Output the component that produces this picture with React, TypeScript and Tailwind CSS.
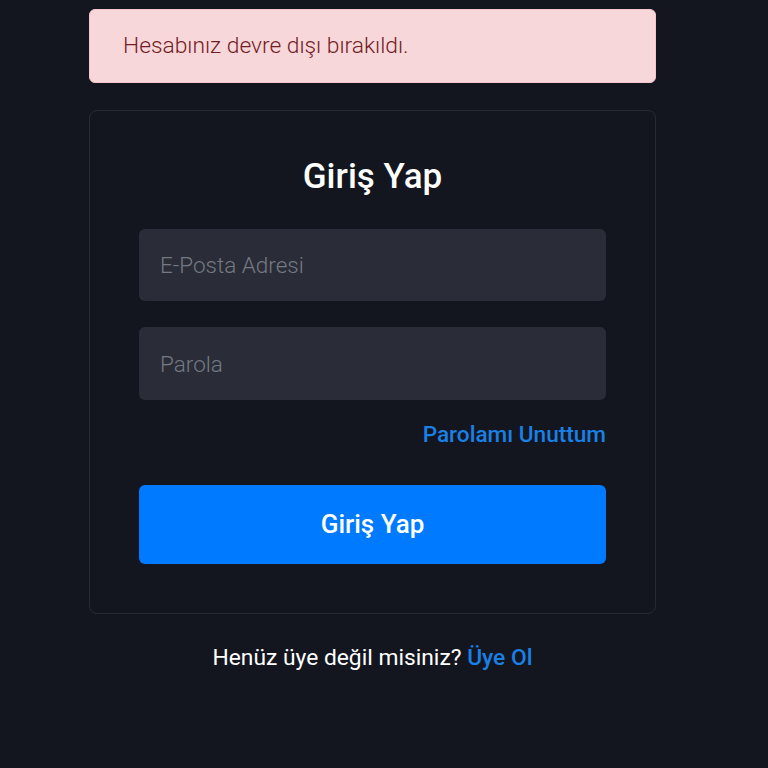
import React from 'react'

export default function App() {
  return (
    <div
      className="min-h-[768px] w-full bg-[#13161f] pt-[9px]"
      style={{ fontFamily: 'Roboto, "Noto Sans", sans-serif' }}
    >
      <div className="ml-[89px] w-[567px]">
        {/* Alert */}
        <div className="flex h-[74px] items-center rounded-[6px] border border-[#f5c6cb] bg-[#f8d7da] px-[33px] text-[22.8px] font-light text-[#721c24]">
          Hesabınız devre dışı bırakıldı.
        </div>

        {/* Card */}
        <div className="mt-[27px] rounded-[8px] border border-[#262a33] px-[49px] pb-[49px] pt-[46px]">
          <h1 className="text-center text-[35px] font-medium leading-[40px] text-white">Giriş Yap</h1>

          <form className="mt-[32px] flex flex-col" onSubmit={e => e.preventDefault()}>
            <input
              type="email"
              placeholder="E-Posta Adresi"
              className="h-[72px] w-full rounded-[6px] bg-[#2a2d38] px-[21px] text-[22.5px] font-light text-white outline-none placeholder:text-[#757982]"
            />
            <input
              type="password"
              placeholder="Parola"
              className="mt-[26px] h-[73px] w-full rounded-[6px] bg-[#2a2d38] px-[21px] text-[22.5px] font-light text-white outline-none placeholder:text-[#757982]"
            />
            <div className="mt-[21px] flex justify-end">
              <a href="#" className="text-[22.6px] font-medium leading-[28px] text-[#1a80e5]">
                Parolamı Unuttum
              </a>
            </div>
            <button
              type="submit"
              className="mt-[36px] h-[79px] w-full rounded-[6px] bg-[#007bff] text-[26px] font-medium text-white"
            >
              Giriş Yap
            </button>
          </form>
        </div>

        {/* Footer */}
        <p className="mt-[30px] text-center text-[22.8px] leading-[28px] text-white">
          Henüz üye değil misiniz?{' '}
          <a href="#" className="font-medium text-[#1a80e5]">Üye Ol</a>
        </p>
      </div>
    </div>
  )
}
